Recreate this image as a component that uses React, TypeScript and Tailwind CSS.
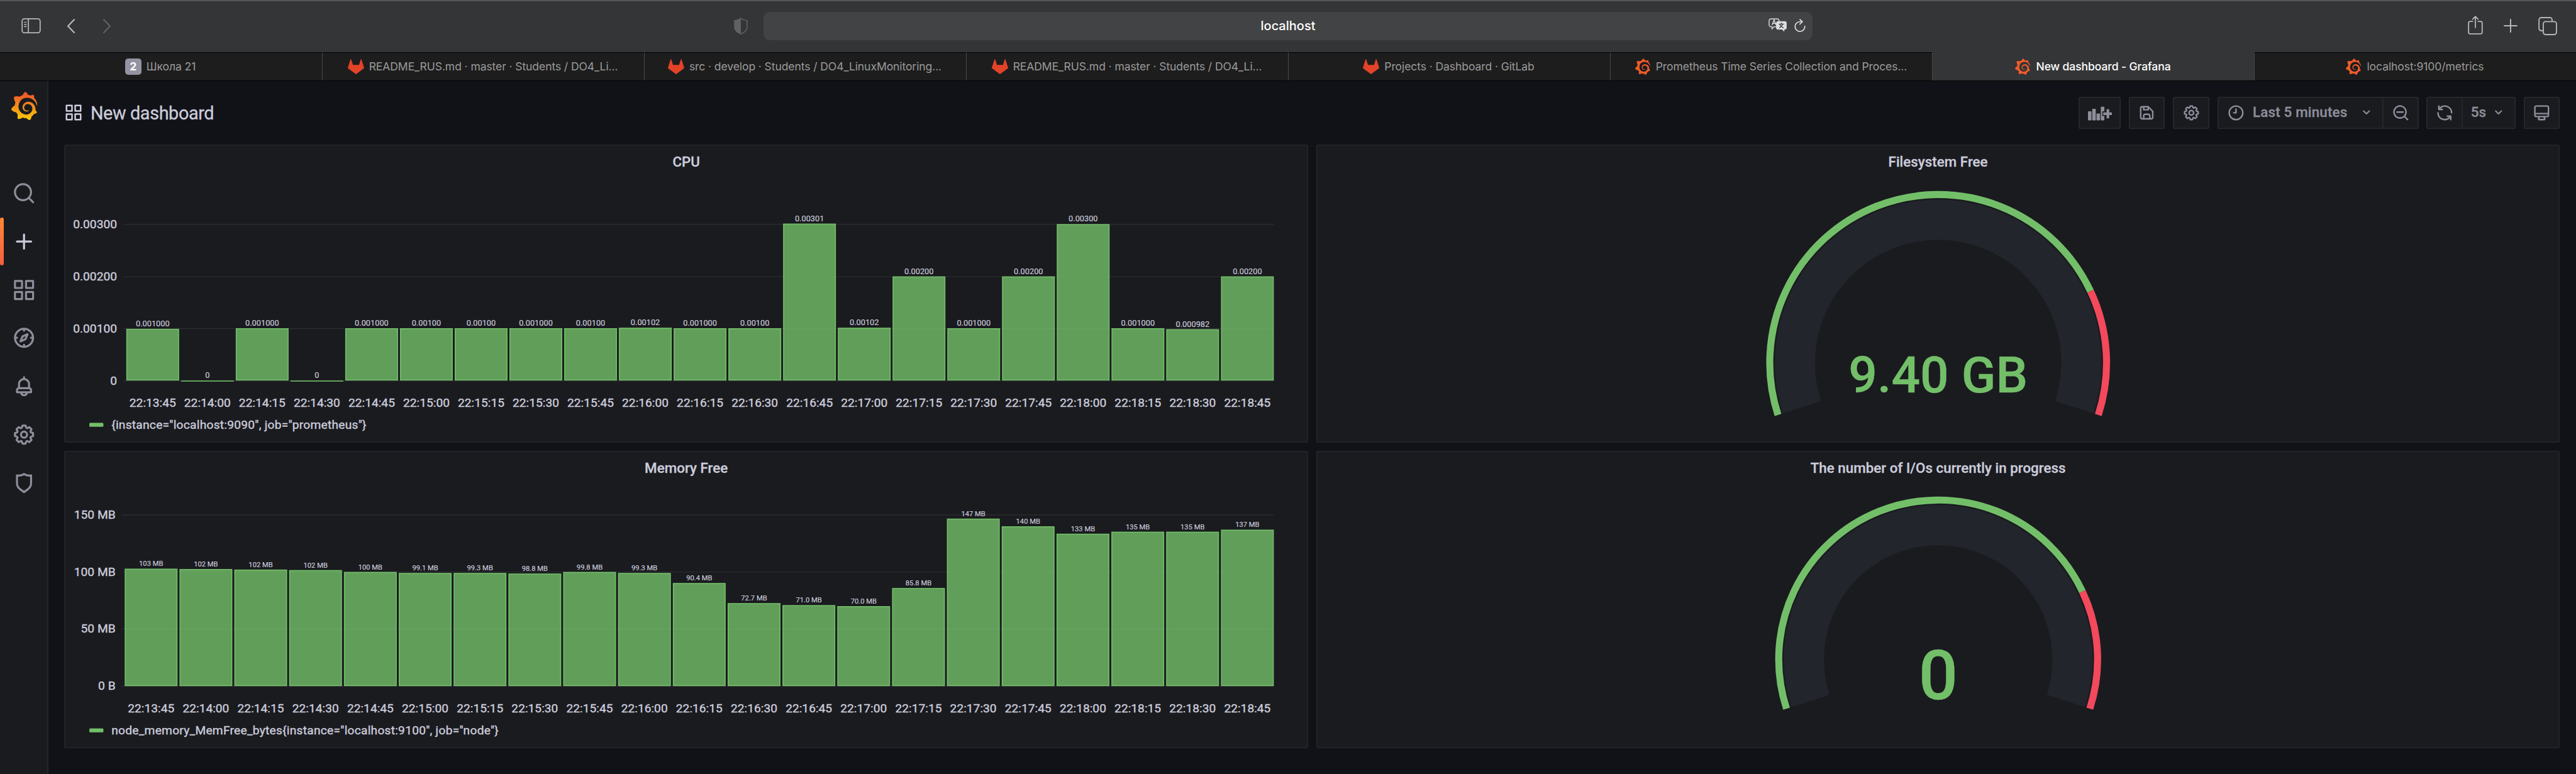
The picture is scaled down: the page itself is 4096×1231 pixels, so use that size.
import { SiGrafana } from "react-icons/si";
import type { ReactNode } from "react";

const paths = {
  apps: "M10,13H3a1,1,0,0,0-1,1v7a1,1,0,0,0,1,1h7a1,1,0,0,0,1-1V14A1,1,0,0,0,10,13ZM9,20H4V15H9ZM21,2H14a1,1,0,0,0-1,1v7a1,1,0,0,0,1,1h7a1,1,0,0,0,1-1V3A1,1,0,0,0,21,2ZM20,9H15V4h5Zm1,4H14a1,1,0,0,0-1,1v7a1,1,0,0,0,1,1h7a1,1,0,0,0,1-1V14A1,1,0,0,0,21,13Zm-1,7H15V15h5ZM10,2H3A1,1,0,0,0,2,3v7a1,1,0,0,0,1,1h7a1,1,0,0,0,1-1V3A1,1,0,0,0,10,2ZM9,9H4V4H9Z",
  search:
    "M21.71,20.29,18,16.61A9,9,0,1,0,16.61,18l3.68,3.68a1,1,0,0,0,1.42,0A1,1,0,0,0,21.71,20.29ZM11,18a7,7,0,1,1,7-7A7,7,0,0,1,11,18Z",
  searchMinus:
    "M21.71,20.29,18,16.61A9,9,0,1,0,16.61,18l3.68,3.68a1,1,0,0,0,1.42,0A1,1,0,0,0,21.71,20.29ZM11,18a7,7,0,1,1,7-7A7,7,0,0,1,11,18ZM15,10H7a1,1,0,0,0,0,2h8a1,1,0,0,0,0-2Z",
  plus: "M19,11H13V5a1,1,0,0,0-2,0v6H5a1,1,0,0,0,0,2h6v6a1,1,0,0,0,2,0V13h6a1,1,0,0,0,0-2Z",
  compass:
    "M12,2A10,10,0,1,0,22,12,10,10,0,0,0,12,2Zm1,17.93V19a1,1,0,0,0-2,0v.93A8,8,0,0,1,4.07,13H5a1,1,0,0,0,0-2H4.07A8,8,0,0,1,11,4.07V5a1,1,0,0,0,2,0V4.07A8,8,0,0,1,19.93,11H19a1,1,0,0,0,0,2h.93A8,8,0,0,1,13,19.93ZM15.14,7.55l-5,2.12a1,1,0,0,0-.52.52l-2.12,5a1,1,0,0,0,.21,1.1,1,1,0,0,0,.7.29.93.93,0,0,0,.4-.09l5-2.12a1,1,0,0,0,.52-.52l2.12-5a1,1,0,0,0-1.31-1.3Zm-2.49,5.1-2.28,1,1-2.28,2.28-1Z",
  bell: "M18,13.18V10a6,6,0,0,0-5-5.91V3a1,1,0,0,0-2,0V4.09A6,6,0,0,0,6,10v3.18A3,3,0,0,0,4,16v2a1,1,0,0,0,1,1H8.14a4,4,0,0,0,7.72,0H19a1,1,0,0,0,1-1V16A3,3,0,0,0,18,13.18ZM8,10a4,4,0,0,1,8,0v3H8Zm4,10a2,2,0,0,1-1.72-1h3.44A2,2,0,0,1,12,20Zm6-3H6V16a1,1,0,0,1,1-1H17a1,1,0,0,1,1,1Z",
  cog: "M21.32,9.55l-1.89-.63.89-1.78A1,1,0,0,0,20.13,6L18,3.87a1,1,0,0,0-1.15-.19l-1.78.89-.63-1.89A1,1,0,0,0,13.5,2h-3a1,1,0,0,0-.95.68L8.92,4.57,7.14,3.68A1,1,0,0,0,6,3.87L3.87,6a1,1,0,0,0-.19,1.15l.89,1.78-1.89.63A1,1,0,0,0,2,10.5v3a1,1,0,0,0,.68.95l1.89.63-.89,1.78A1,1,0,0,0,3.87,18L6,20.13a1,1,0,0,0,1.15.19l1.78-.89.63,1.89a1,1,0,0,0,.95.68h3a1,1,0,0,0,.95-.68l.63-1.89,1.78.89A1,1,0,0,0,18,20.13L20.13,18a1,1,0,0,0,.19-1.15l-.89-1.78,1.89-.63A1,1,0,0,0,22,13.5v-3A1,1,0,0,0,21.32,9.55ZM20,12.78l-1.2.4A2,2,0,0,0,17.64,16l.57,1.14-1.1,1.1L16,17.64a2,2,0,0,0-2.79,1.16l-.4,1.2H11.22l-.4-1.2A2,2,0,0,0,8,17.64l-1.14.57-1.1-1.1L6.36,16A2,2,0,0,0,5.2,13.18L4,12.78V11.22l1.2-.4A2,2,0,0,0,6.36,8L5.79,6.89l1.1-1.1L8,6.36A2,2,0,0,0,10.82,5.2l.4-1.2h1.56l.4,1.2A2,2,0,0,0,16,6.36l1.14-.57,1.1,1.1L17.64,8a2,2,0,0,0,1.16,2.79l1.2.4ZM12,8a4,4,0,1,0,4,4A4,4,0,0,0,12,8Zm0,6a2,2,0,1,1,2-2A2,2,0,0,1,12,14Z",
  shield:
    "M19.63,3.65a1,1,0,0,0-.84-.2,8,8,0,0,1-6.22-1.27,1,1,0,0,0-1.14,0A8,8,0,0,1,5.21,3.45a1,1,0,0,0-.84.2A1,1,0,0,0,4,4.43v7.45a9,9,0,0,0,3.77,7.33l3.65,2.6a1,1,0,0,0,1.16,0l3.65-2.6A9,9,0,0,0,20,11.88V4.43A1,1,0,0,0,19.63,3.65ZM18,11.88a7,7,0,0,1-2.93,5.7L12,19.77,8.93,17.58A7,7,0,0,1,6,11.88V5.58a10,10,0,0,0,6-1.39,10,10,0,0,0,6,1.39Z",
  save: "M20.71,9.29l-6-6a1,1,0,0,0-.32-.21A1.09,1.09,0,0,0,14,3H6A3,3,0,0,0,3,6V18a3,3,0,0,0,3,3H18a3,3,0,0,0,3-3V10A1,1,0,0,0,20.71,9.29ZM9,5h4V7H9Zm6,14H9V16a1,1,0,0,1,1-1h4a1,1,0,0,1,1,1Zm4-1a1,1,0,0,1-1,1H17V16a3,3,0,0,0-3-3H10a3,3,0,0,0-3,3v3H6a1,1,0,0,1-1-1V6A1,1,0,0,1,6,5H7V8A1,1,0,0,0,8,9h6a1,1,0,0,0,1-1V6.41l4,4Z",
  clock:
    "M12,2A10,10,0,1,0,22,12,10,10,0,0,0,12,2Zm0,18a8,8,0,1,1,8-8A8,8,0,0,1,12,20ZM12,6a1,1,0,0,0-1,1v4H9a1,1,0,0,0,0,2h3a1,1,0,0,0,1-1V7A1,1,0,0,0,12,6Z",
  angleDown:
    "M17,9.17a1,1,0,0,0-1.41,0L12,12.71,8.46,9.17a1,1,0,0,0-1.41,0,1,1,0,0,0,0,1.42l4.24,4.24a1,1,0,0,0,1.42,0L17,10.59A1,1,0,0,0,17,9.17Z",
  sync: "M19.91,15.51H15.38a1,1,0,0,0,0,2h2.4A8,8,0,0,1,4,12a1,1,0,0,0-2,0,10,10,0,0,0,16.88,7.23V21a1,1,0,0,0,2,0V16.5A1,1,0,0,0,19.91,15.51ZM12,2A10,10,0,0,0,5.12,4.77V3a1,1,0,0,0-2,0V7.5a1,1,0,0,0,1,1h4.5a1,1,0,0,0,0-2H6.22A8,8,0,0,1,20,12a1,1,0,0,0,2,0A10,10,0,0,0,12,2Z",
  monitor:
    "M19,2H5A3,3,0,0,0,2,5V15a3,3,0,0,0,3,3H7.64l-.58,1a2,2,0,0,0,0,2,2,2,0,0,0,1.75,1h6.46A2,2,0,0,0,17,21a2,2,0,0,0,0-2l-.59-1H19a3,3,0,0,0,3-3V5A3,3,0,0,0,19,2ZM8.77,20,10,18H14l1.2,2ZM20,15a1,1,0,0,1-1,1H5a1,1,0,0,1-1-1V14H20Zm0-3H4V5A1,1,0,0,1,5,4H19a1,1,0,0,1,1,1Z",
};

type IconName = keyof typeof paths;

function Icon({ name, className }: { name: IconName; className: string }) {
  return (
    <svg viewBox="0 0 24 24" fill="currentColor" className={`shrink-0 ${className}`}>
      <path d={paths[name]} />
    </svg>
  );
}

function GitLabMark() {
  return (
    <svg viewBox="0 0 24 24" fill="#e24329" className="size-[26px] shrink-0">
      <path d="M23.955 13.587l-1.342-4.135-2.664-8.189a.455.455 0 0 0-.867 0L16.418 9.45H7.582L4.918 1.263a.455.455 0 0 0-.867 0L1.386 9.45.044 13.587a.924.924 0 0 0 .331 1.03L12 23.054l11.625-8.436a.92.92 0 0 0 .33-1.031" />
    </svg>
  );
}

/* ---------- Browser chrome ---------- */

function BrowserBar() {
  return (
    <div className="grid h-[83px] shrink-0 grid-cols-[1214px_1668px_1fr] border-t-2 border-[#55575a] bg-[#343537] text-[#b6b7b8]">
      <div className="flex items-center pr-[25px] pb-[3px] pl-[34px]">
        <svg viewBox="0 0 38 30" fill="none" stroke="currentColor" strokeWidth="2.2" className="h-6 w-[31px]">
          <rect x="1.1" y="1.1" width="35.8" height="27.8" rx="4.5" />
          <path d="M13.5 1v28" />
          <path d="M5 8h5M5 12.3h5M5 16.6h5" strokeWidth="1.8" />
        </svg>
        <svg viewBox="0 0 16 28" fill="none" stroke="currentColor" strokeWidth="2.8" strokeLinecap="round" strokeLinejoin="round" className="ml-[41px] h-[23px] w-[14px]">
          <path d="M14 1.5 2 14l12 12.5" />
        </svg>
        <svg viewBox="0 0 16 28" fill="none" stroke="#606163" strokeWidth="2.8" strokeLinecap="round" strokeLinejoin="round" className="ml-[43px] h-[23px] w-[14px]">
          <path d="M2 1.5 14 14 2 26.5" />
        </svg>
        <svg viewBox="0 0 27 33" className="ml-auto h-[27px] w-[22px]">
          <path d="M13.5 1.2C9.8 3.9 6 5.4 1.2 5.7V18c0 6.8 4.7 10.7 12.3 13.8Z" fill="#606163" />
          <path d="M13.5 1.2c3.7 2.7 7.5 4.2 12.3 4.5V18c0 6.8-4.7 10.7-12.3 13.8C5.9 28.7 1.2 24.8 1.2 18V5.7C6 5.4 9.8 3.9 13.5 1.2Z" fill="none" stroke="#606163" strokeWidth="2" />
        </svg>
      </div>
      <div className="mt-[17px] grid h-[45px] grid-cols-[1fr_auto_1fr] items-center rounded-[10px] bg-[#424344]">
        <span className="col-start-2 pb-px text-[20px] font-medium text-white">localhost</span>
        <div className="flex items-center justify-end gap-[11px] pr-[11px] pb-[3px] text-[#dededf]">
          <svg viewBox="0 0 38 28" className="h-[22px] w-[30px]">
            <path d="M5 1.2h12.5a3.8 3.8 0 0 1 3.8 3.8v8.5a3.8 3.8 0 0 1-3.8 3.8H11l-4 4v-4H5a3.8 3.8 0 0 1-3.8-3.8V5A3.8 3.8 0 0 1 5 1.2Z" fill="none" stroke="currentColor" strokeWidth="1.8" />
            <path d="m7 14 4.200-10.500 4.200 10.500M8.500 10.500h5.400" fill="none" stroke="currentColor" strokeWidth="1.8" />
            <path d="M19.5 6.2h13A4.2 4.2 0 0 1 36.7 10.4v8.4a4.2 4.2 0 0 1-4.2 4.2H32v4.500L27.500 23h-8a4.2 4.2 0 0 1-4.2-4.2v-8.4a4.2 4.2 0 0 1 4.2-4.2Z" fill="currentColor" />
            <path d="M26 9v2.500M20.800 12h10.400M21.500 19.500c3.500-1.500 6-4 7-7.500M23 12.500c1 3 3.500 5.500 7.500 7" fill="none" stroke="#424344" strokeWidth="1.7" />
          </svg>
          <svg viewBox="0 0 22 26" fill="none" stroke="currentColor" strokeWidth="2.1" strokeLinecap="round" strokeLinejoin="round" className="h-[21px] w-[18px]">
            <path d="M15.5 5.6H11A9.6 9.6 0 1 0 20.6 14.5" />
            <path d="M11 1.2l4.8 4.4-4.8 4.8" />
          </svg>
        </div>
      </div>
      <div className="flex items-center justify-end gap-[33px] pr-[30px] pb-[3px]">
        <svg viewBox="0 0 30 38" fill="none" stroke="currentColor" strokeWidth="2.3" strokeLinecap="round" strokeLinejoin="round" className="mb-[2px] h-[30px] w-6">
          <path d="M9.5 11.5H4.5a3.2 3.2 0 0 0-3.2 3.2v18.600a3.200 3.200 0 0 0 3.200 3.200h21a3.200 3.200 0 0 0 3.200-3.200V14.700a3.200 3.200 0 0 0-3.200-3.200h-5M15 24V1.500M9.500 7 15 1.500 20.500 7" />
        </svg>
        <svg viewBox="0 0 28 28" fill="none" stroke="currentColor" strokeWidth="2.5" strokeLinecap="round" className="mb-px size-[22px]">
          <path d="M14 1.3v25.4M1.3 14h25.4" />
        </svg>
        <svg viewBox="0 0 37 36" fill="none" stroke="currentColor" strokeWidth="2.3" className="h-[29px] w-[30px]">
          <path d="M9.500 27H5.500a4.200 4.200 0 0 1-4.200-4.200V5.500a4.200 4.200 0 0 1 4.200-4.200h17.500a4.200 4.200 0 0 1 4.200 4.200v3.500" />
          <rect x="9.8" y="9.2" width="26" height="25.5" rx="4.2" />
        </svg>
      </div>
    </div>
  );
}

type Tab = { title: string; kind: "school" | "gitlab" | "grafana"; active?: boolean };

const tabs: Tab[] = [
  { title: "Школа 21", kind: "school" },
  { title: "README_RUS.md · master · Students / DO4_Li...", kind: "gitlab" },
  { title: "src · develop · Students / DO4_LinuxMonitoring...", kind: "gitlab" },
  { title: "README_RUS.md · master · Students / DO4_Li...", kind: "gitlab" },
  { title: "Projects · Dashboard · GitLab", kind: "gitlab" },
  { title: "Prometheus Time Series Collection and Proces...", kind: "grafana" },
  { title: "New dashboard - Grafana", kind: "grafana", active: true },
  { title: "localhost:9100/metrics", kind: "grafana" },
];

function TabStrip() {
  return (
    <div className="grid h-[46px] shrink-0 grid-cols-8 border-b border-black">
      {tabs.map((tab, i) => (
        <div
          key={i}
          className={`flex items-center justify-center gap-[8px] border-t pr-[2px] text-[17.6px] tracking-[-0.007em] whitespace-nowrap ${
            tab.active
              ? "border-t-[#343537] bg-[#343537] font-medium text-white"
              : "border-t-black bg-[#1d1d1d] text-[#9a9a9a]"
          } ${i > 0 ? "border-l border-l-[#48494a]" : ""}`}
        >
          {tab.kind === "school" && (
            <span className="flex size-[26px] items-center justify-center rounded-[5px] bg-[#9393a3] font-bold text-white">
              2
            </span>
          )}
          {tab.kind === "gitlab" && <GitLabMark />}
          {tab.kind === "grafana" && <SiGrafana className="size-[26px] shrink-0 text-[#f15b2a]" />}
          <span>{tab.title}</span>
        </div>
      ))}
    </div>
  );
}

/* ---------- Grafana shell ---------- */

const navItems: { icon: IconName; active?: boolean }[] = [
  { icon: "search" },
  { icon: "plus", active: true },
  { icon: "apps" },
  { icon: "compass" },
  { icon: "bell" },
  { icon: "cog" },
  { icon: "shield" },
];

function SideMenu() {
  return (
    <nav className="flex w-[77px] shrink-0 flex-col border-r-2 border-[#25262b] bg-[#1a1b1f]">
      <div className="flex h-[139.8px] justify-center pt-[16.5px] pl-[2px]">
        <svg width="0" height="0" className="absolute">
          <linearGradient id="brand" x1="0" y1="0" x2="0" y2="1">
            <stop offset="0.1" stopColor="#f05a28" />
            <stop offset="1" stopColor="#fbca0a" />
          </linearGradient>
        </svg>
        <SiGrafana className="size-[45px]" fill="url(#brand)" />
      </div>
      {navItems.map((item) => (
        <div
          key={item.icon}
          className={`relative flex h-[76.8px] items-center justify-center pl-[2px] ${
            item.active ? "text-[#ccccdc]" : "text-[#8e8e9a]"
          }`}
        >
          {item.active && (
            <span className="absolute top-0 left-0 h-full w-[6.4px] rounded-[3px] bg-linear-to-b from-[#ff8833] to-[#f55f3e]" />
          )}
          <Icon name={item.icon} className="size-[38.4px]" />
        </div>
      ))}
    </nav>
  );
}

function ToolButton({ children, className }: { children: ReactNode; className: string }) {
  return (
    <div
      className={`flex h-[51.2px] items-center justify-center rounded-[3.2px] bg-[#1a1b1f] shadow-[inset_0_0_0_1.6px_#292a2f] ${className}`}
    >
      {children}
    </div>
  );
}

function AddPanelIcon() {
  return (
    <svg viewBox="0 0 48 36" fill="currentColor" className="ml-px h-[28.8px] w-[38.4px]">
      <rect x="0" y="15" width="7" height="18" rx="1" />
      <rect x="8.5" y="10" width="7" height="23" rx="1" />
      <rect x="17" y="19.5" width="7" height="13.5" rx="1" />
      <path d="M26.5 6h5.1a1 1 0 0 1 1 1v8h-2.6a1.5 1.5 0 0 0-1.5 1.5v6.500a1.500 1.500 0 0 0 1.500 1.500h2.600V32a1 1 0 0 1-1 1h-5.100a1 1 0 0 1-1-1V7a1 1 0 0 1 1-1Z" />
      <path d="M37 11h5.2v6.2h5.8v5.4h-5.8V29H37v-6.400h-6.700v-5.400H37Z" />
    </svg>
  );
}

function DashboardHeader() {
  return (
    <header className="flex h-[101.4px] items-center justify-between pb-px">
      <div className="flex items-center text-[#ccccdc]">
        <Icon name="apps" className="size-[30px]" />
        <h1 className="ml-[11.5px] pt-[2px] text-[28.8px] leading-none tracking-[-0.013em] [-webkit-text-stroke:0.3px_currentColor]">
          New dashboard
        </h1>
      </div>
      <div className="flex gap-[12.8px] text-[22.4px] font-medium tracking-[0.007em] text-[#8e8e9a] [-webkit-text-stroke:0.3px_currentColor]">
        <ToolButton className="w-[67.2px]">
          <AddPanelIcon />
        </ToolButton>
        <ToolButton className="w-[57.6px]">
          <Icon name="save" className="size-[28.8px]" />
        </ToolButton>
        <ToolButton className="w-[57.6px]">
          <Icon name="cog" className="size-[28.8px]" />
        </ToolButton>
        <div className="flex">
          <ToolButton className="w-[264px] rounded-r-none pl-[2px]">
            <Icon name="clock" className="size-[28.8px]" />
            <span className="ml-[12px]">Last 5 minutes</span>
            <Icon name="angleDown" className="ml-[18px] size-[25.6px]" />
          </ToolButton>
          <ToolButton className="-ml-[1.6px] w-[57.6px] rounded-l-none pl-px">
            <Icon name="searchMinus" className="size-[28.8px]" />
          </ToolButton>
        </div>
        <div className="flex">
          <ToolButton className="w-[57.6px] rounded-r-none pl-px">
            <Icon name="sync" className="size-[28.8px]" />
          </ToolButton>
          <ToolButton className="-ml-[1.6px] w-[85.6px] rounded-l-none">
            <span>5s</span>
            <Icon name="angleDown" className="ml-[7px] size-[25.6px]" />
          </ToolButton>
        </div>
        <ToolButton className="w-[57.6px]">
          <Icon name="monitor" className="size-[28.8px]" />
        </ToolButton>
      </div>
    </header>
  );
}

function Panel({ title, children }: { title: string; children: ReactNode }) {
  return (
    <section className="flex flex-col rounded-[3.2px] bg-[#1a1b1f] shadow-[inset_0_0_0_1.6px_#25262b]">
      <h2 className="flex h-[51.2px] shrink-0 items-center justify-center pt-[4px] text-[22.4px] font-medium text-[#ccccdc] [-webkit-text-stroke:0.3px_currentColor]">
        {title}
      </h2>
      {children}
    </section>
  );
}

/* ---------- Bar charts ---------- */

const times = [
  "22:13:45", "22:14:00", "22:14:15", "22:14:30", "22:14:45", "22:15:00", "22:15:15",
  "22:15:30", "22:15:45", "22:16:00", "22:16:15", "22:16:30", "22:16:45", "22:17:00",
  "22:17:15", "22:17:30", "22:17:45", "22:18:00", "22:18:15", "22:18:30", "22:18:45",
];

type Bar = { label: string; top: number };
type Tick = { label: string; y: number };

const cpuBars: Bar[] = [
  { label: "0.001000", top: 301.2 },
  { label: "0", top: 405 },
  { label: "0.001000", top: 300 },
  { label: "0", top: 405 },
  { label: "0.001000", top: 300 },
  { label: "0.00100", top: 300 },
  { label: "0.00100", top: 300 },
  { label: "0.001000", top: 300 },
  { label: "0.00100", top: 300 },
  { label: "0.00102", top: 299 },
  { label: "0.001000", top: 300 },
  { label: "0.00100", top: 300 },
  { label: "0.00301", top: 92 },
  { label: "0.00102", top: 299 },
  { label: "0.00200", top: 197 },
  { label: "0.001000", top: 300 },
  { label: "0.00200", top: 197 },
  { label: "0.00300", top: 93 },
  { label: "0.001000", top: 300 },
  { label: "0.000982", top: 302 },
  { label: "0.00200", top: 197 },
];

const cpuTicks: Tick[] = [
  { label: "0.00300", y: 93.5 },
  { label: "0.00200", y: 197.5 },
  { label: "0.00100", y: 300.8 },
  { label: "0", y: 404.5 },
];

const memoryBars: Bar[] = [
  { label: "103 MB", top: 170.5 },
  { label: "102 MB", top: 171.2 },
  { label: "102 MB", top: 172.3 },
  { label: "102 MB", top: 173.3 },
  { label: "100 MB", top: 177 },
  { label: "99.1 MB", top: 179 },
  { label: "99.3 MB", top: 179 },
  { label: "98.8 MB", top: 180.2 },
  { label: "99.8 MB", top: 177 },
  { label: "99.3 MB", top: 179 },
  { label: "90.4 MB", top: 199 },
  { label: "72.7 MB", top: 239 },
  { label: "71.0 MB", top: 243 },
  { label: "70.0 MB", top: 245 },
  { label: "85.8 MB", top: 209 },
  { label: "147 MB", top: 71 },
  { label: "140 MB", top: 86.3 },
  { label: "133 MB", top: 101 },
  { label: "135 MB", top: 97 },
  { label: "135 MB", top: 97 },
  { label: "137 MB", top: 93 },
];

const memoryTicks: Tick[] = [
  { label: "150 MB", y: 63.5 },
  { label: "100 MB", y: 177.2 },
  { label: "50 MB", y: 290.5 },
  { label: "0 B", y: 404.3 },
];

type BarChartProps = {
  bars: Bar[];
  ticks: Tick[];
  axisX: number;
  firstBarX: number;
  labelSize: number;
  legend: string;
};

const barWidth = 105;
const lastBarX = 2299.3;
const baseY = 404;

function BarChart({ bars, ticks, axisX, firstBarX, labelSize, legend }: BarChartProps) {
  const pitch = (lastBarX - firstBarX) / (bars.length - 1);
  return (
    <svg viewBox="0 0 2472 528" className="h-[422.4px] w-[1977.6px] text-[#ccccdc]" fill="currentColor">
      {ticks.map((tick) => (
        <g key={tick.label}>
          <path d={`M${axisX + 12} ${tick.y}H2404.5`} stroke="#2d2f33" strokeWidth="1.5" />
          <text x={axisX} y={tick.y + 7.5} textAnchor="end" fontSize="24" stroke="currentColor" strokeWidth="0.5">
            {tick.label}
          </text>
        </g>
      ))}
      {bars.map((bar, i) => {
        const x = firstBarX + i * pitch;
        const flat = bar.top >= baseY;
        return (
          <g key={times[i]}>
            {flat ? (
              <rect x={x} y={baseY} width={barWidth} height="2" fill="#73bf69" />
            ) : (
              <rect
                x={x + 1}
                y={bar.top + 1}
                width={barWidth - 2}
                height={baseY - bar.top - 2}
                fill="#73bf69"
                fillOpacity="0.8"
                stroke="#73bf69"
                strokeWidth="2"
              />
            )}
            <text x={x + barWidth / 2} y={bar.top - (flat ? 6 : 5)} textAnchor="middle" fontSize={labelSize} stroke="currentColor" strokeWidth="0.2">
              {bar.label}
            </text>
            <text x={x + barWidth / 2} y="456" textAnchor="middle" fontSize="24" stroke="currentColor" strokeWidth="0.5">
              {times[i]}
            </text>
          </g>
        );
      })}
      <rect x="50" y="488" width="28" height="8" rx="2" fill="#73bf69" />
      <text x="94" y="500" fontSize="24" letterSpacing="0.3" stroke="currentColor" strokeWidth="0.5">
        {legend}
      </text>
    </svg>
  );
}

/* ---------- Gauges ---------- */

type GaugeProps = { value: string; cy: number; radius: number; fontSize: number; baseline: number };

const gaugeCx = 1236;

function arc(cy: number, r: number, from: number, to: number) {
  const point = (deg: number) => {
    const a = (deg * Math.PI) / 180;
    return `${(gaugeCx + r * Math.cos(a)).toFixed(2)} ${(cy - r * Math.sin(a)).toFixed(2)}`;
  };
  return `M${point(from)}A${r} ${r} 0 ${from - to > 180 ? 1 : 0} 1 ${point(to)}`;
}

function Gauge({ value, cy, radius, fontSize, baseline }: GaugeProps) {
  return (
    <svg viewBox="0 0 2472 528" className="h-[422.4px] w-[1977.6px]" fill="none">
      <path d={arc(cy, radius - 57, 198, -18)} stroke="#22252b" strokeWidth="80" />
      <path d={arc(cy, radius - 7, 198, 25.2)} stroke="#73bf69" strokeWidth="14" />
      <path d={arc(cy, radius - 7, 25.2, -18)} stroke="#f2495c" strokeWidth="14" />
      <text x={gaugeCx} y={baseline} textAnchor="middle" fontSize={fontSize} fontWeight="500" fill="#73bf69" stroke="#73bf69" strokeWidth="0.5">
        {value}
      </text>
    </svg>
  );
}

export default function App() {
  return (
    <div className="flex h-[1231px] w-[4096px] flex-col overflow-hidden bg-[#111217] font-['Roboto',sans-serif]">
      <div className="font-['Inter',sans-serif]">
        <BrowserBar />
        <TabStrip />
      </div>
      <div className="flex flex-1">
        <SideMenu />
        <main className="flex-1 pr-[25.6px] pl-[25.4px]">
          <DashboardHeader />
          <div className="grid grid-cols-[1977.6px_1977.6px] grid-rows-[473.6px_473.6px] gap-[12.8px]">
            <Panel title="CPU">
              <BarChart
                bars={cpuBars}
                ticks={cpuTicks}
                axisX={105}
                firstBarX={123.5}
                labelSize={16}
                legend={'{instance="localhost:9090", job="prometheus"}'}
              />
            </Panel>
            <Panel title="Filesystem Free">
              <Gauge value="9.40 GB" cy={369} radius={341.7} fontSize={100.5} baseline={427} />
            </Panel>
            <Panel title="Memory Free">
              <BarChart
                bars={memoryBars}
                ticks={memoryTicks}
                axisX={102}
                firstBarX={120.3}
                labelSize={14}
                legend={'node_memory_MemFree_bytes{instance="localhost:9100", job="node"}'}
              />
            </Panel>
            <Panel title="The number of I/Os currently in progress">
              <Gauge value="0" cy={351} radius={323.9} fontSize={137} baseline={430.5} />
            </Panel>
          </div>
        </main>
      </div>
    </div>
  );
}
